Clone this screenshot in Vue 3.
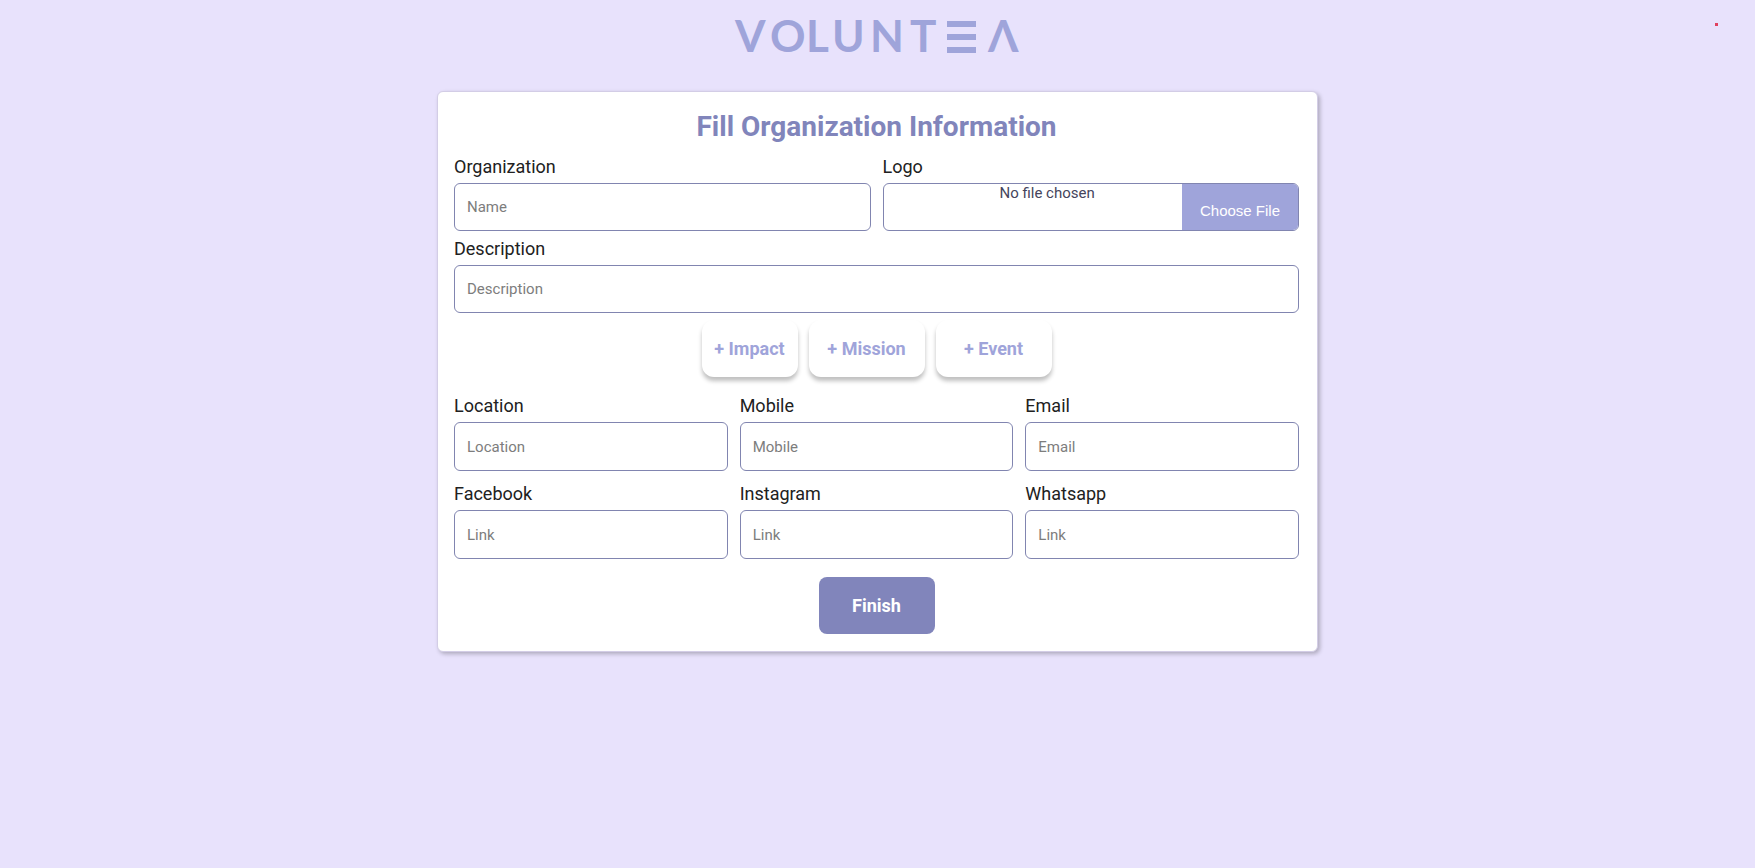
<script setup>
const details = [
  { id: 'location', label: 'Location', type: 'text', placeholder: 'Location' },
  { id: 'mobile', label: 'Mobile', type: 'tel', placeholder: 'Mobile' },
  { id: 'email', label: 'Email', type: 'email', placeholder: 'Email' },
  { id: 'facebook', label: 'Facebook', type: 'text', placeholder: 'Link' },
  { id: 'instagram', label: 'Instagram', type: 'text', placeholder: 'Link' },
  { id: 'whatsapp', label: 'Whatsapp', type: 'text', placeholder: 'Link' },
]
</script>

<template>
  <div class="page">
    <header class="header">
      <svg class="logo" width="285" height="36" viewBox="0 0 285 36" role="img" aria-label="Voluntea">
        <text class="wordmark" y="34" x="0 35 71 97 135 175">VOLUNT</text>
        <g class="bars">
          <rect x="212" y="3" width="29" height="6" />
          <rect x="212" y="16" width="29" height="6" />
          <rect x="212" y="29" width="29" height="6" />
        </g>
        <text class="wordmark" y="34" x="253">Λ</text>
      </svg>
      <span class="dot"></span>
    </header>

    <main>
      <form class="card" @submit.prevent>
        <h1 class="title">Fill Organization Information</h1>

        <div class="row two">
          <div class="field">
            <label for="organization">Organization</label>
            <input id="organization" type="text" placeholder="Name" />
          </div>
          <div class="field">
            <label for="logo">Logo</label>
            <input id="logo" class="file" type="file" />
          </div>
        </div>

        <div class="field">
          <label for="description">Description</label>
          <input id="description" type="text" placeholder="Description" />
        </div>

        <div class="actions">
          <button type="button" class="add compact">+ Impact</button>
          <button type="button" class="add">+ Mission</button>
          <button type="button" class="add">+ Event</button>
        </div>

        <div class="row three">
          <div v-for="item in details" :key="item.id" class="field">
            <label :for="item.id">{{ item.label }}</label>
            <input :id="item.id" :type="item.type" :placeholder="item.placeholder" />
          </div>
        </div>

        <button type="submit" class="finish">Finish</button>
      </form>
    </main>
  </div>
</template>

<style>
body {
  margin: 0;
  background: #e8e2fc;
}
</style>

<style scoped>
.page {
  min-height: 100vh;
  box-sizing: border-box;
  padding: 18px 16px;
  font-family: Roboto, "Liberation Sans", sans-serif;
  color: #212121;
}

.header {
  position: relative;
  display: flex;
  justify-content: center;
  margin-bottom: 37px;
}

.logo {
  display: block;
  overflow: visible;
}

.wordmark {
  font: 700 44px Lato, sans-serif;
  fill: #9fa4da;
}

.bars {
  fill: #9fa4da;
}

.dot {
  position: absolute;
  top: 5px;
  right: 21px;
  width: 3px;
  height: 3px;
  background: #e0405f;
}

.card {
  box-sizing: border-box;
  max-width: 881px;
  margin: 0 auto;
  padding: 17px 18px 17px 16px;
  display: flex;
  flex-direction: column;
  background: #fff;
  border: 1px solid #d3cde6;
  border-radius: 6px;
  box-shadow: 2px 2px 4px rgba(0, 0, 0, 0.25);
}

.title {
  margin: 0 0 10px;
  font-size: 28px;
  line-height: 36px;
  font-weight: 700;
  text-align: center;
  color: #8185bb;
}

.row {
  display: grid;
  gap: 11px 12px;
}

.two {
  grid-template-columns: repeat(2, minmax(0, 1fr));
  margin-bottom: 6px;
}

.three {
  grid-template-columns: repeat(3, minmax(0, 1fr));
}

.field {
  display: flex;
  flex-direction: column;
  gap: 4px;
}

.field label {
  font-size: 18px;
  line-height: 24px;
}

.field input {
  box-sizing: border-box;
  width: 100%;
  height: 48px;
  padding: 0 12px;
  font-family: inherit;
  font-size: 15px;
  color: #45455c;
  background: #fff;
  border: 1px solid #8185b0;
  border-radius: 6px;
  outline: none;
}

.three input {
  height: 49px;
}

.field input::placeholder {
  color: #7d7d7d;
}

.field .file {
  padding: 0 0 0 116px;
  overflow: hidden;
}

.file::file-selector-button {
  float: right;
  height: 48px;
  margin: 0;
  padding: 4px 18px 0;
  font-family: "Liberation Sans", Arial, sans-serif;
  font-size: 15px;
  color: #fff;
  background: #9fa4da;
  border: 0;
}

.actions {
  display: flex;
  justify-content: center;
  gap: 11px;
  margin: 7px 0 17px;
}

.add {
  width: 116px;
  height: 57px;
  padding: 0;
  font-family: inherit;
  font-size: 18px;
  font-weight: 700;
  color: #9fa4da;
  background: #fff;
  border: 0;
  border-radius: 12px;
  box-shadow: 0 4px 4px rgba(0, 0, 0, 0.25);
}

.compact {
  width: 96px;
}

.finish {
  align-self: center;
  width: 116px;
  height: 57px;
  margin-top: 18px;
  padding: 0;
  font-family: inherit;
  font-size: 18px;
  font-weight: 700;
  color: #fff;
  background: #8185bb;
  border: 0;
  border-radius: 8px;
}
</style>
